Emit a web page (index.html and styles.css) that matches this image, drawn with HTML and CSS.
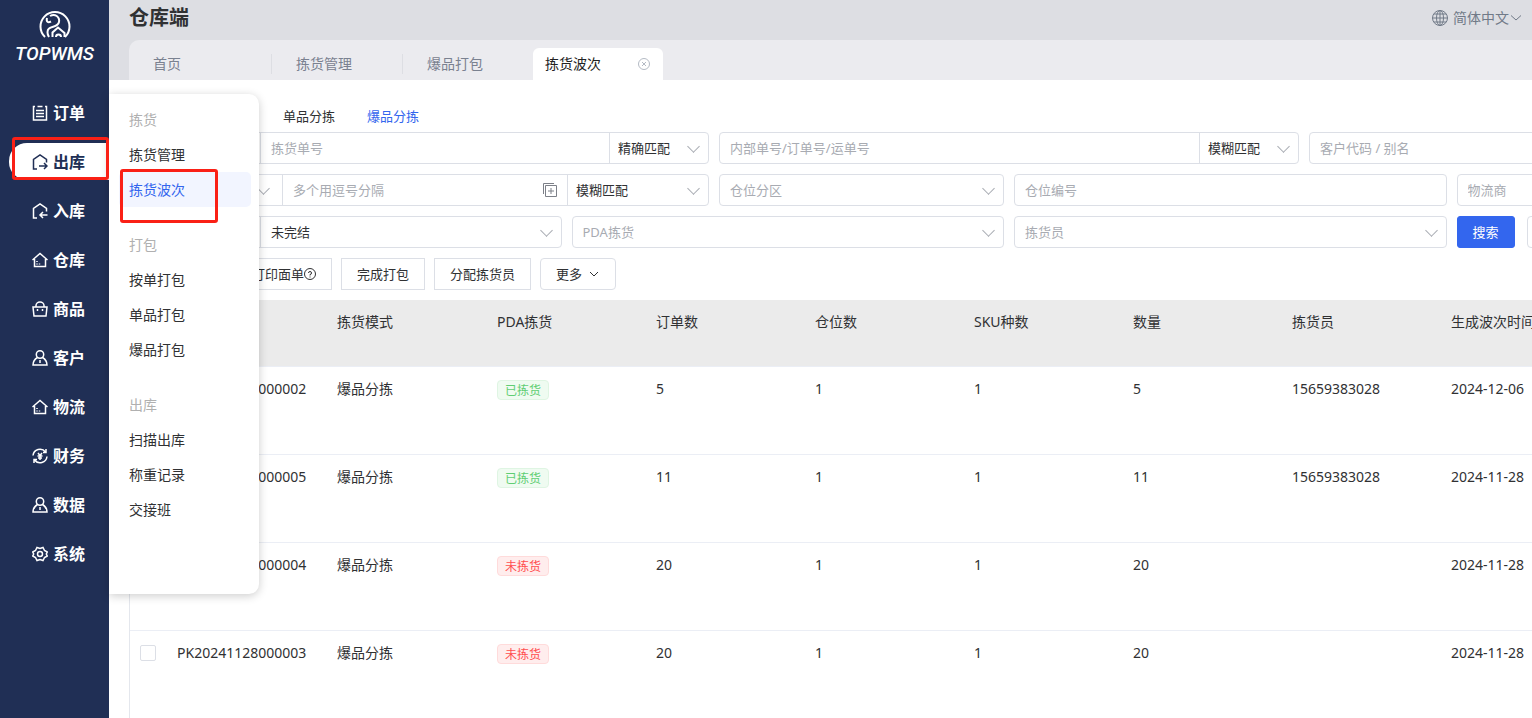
FILE: index.html
```html
<!DOCTYPE html>
<html lang="zh-CN">
<head>
    <meta charset="UTF-8">
    <meta name="viewport" content="width=device-width, initial-scale=1.0">
    <title>仓库端 - 拣货波次</title>
    <link rel="stylesheet" href="styles.css">
</head>
<body>
    <!-- 图标 -->
    <svg class="sprite" aria-hidden="true">
        <symbol id="i-order" viewBox="0 0 16 16"><path d="M3 1.5H1.5V15H14.5V1.5H13M5.5 1.5H10.5M4 5.5H12M4 8.5H12M4 11.5H12"/></symbol>
        <symbol id="i-out" viewBox="0 0 16 16"><path d="M5 15H1.5V5.5L8 1L14.5 5.5V8.5M7 12H14.5M12 9L15 12L12 15"/></symbol>
        <symbol id="i-in" viewBox="0 0 16 16"><path d="M5 15H1.5V5.5L8 1L14.5 5.5V8.5M15.500 12H8M11 9L8 12L11 15"/></symbol>
        <symbol id="i-house" viewBox="0 0 16 16"><path d="M.5 8L8 1.500L15.500 8M2.500 7V14.500H13.500V7"/><path d="M5 9V10M5 11.500V12.500M7.500 11.500V12.500"/></symbol>
        <symbol id="i-goods" viewBox="0 0 16 16"><path d="M1 6H15L14 15H2ZM4 6V4.5A4 3.5 0 0 1 12 4.5V6"/><path d="M5.5 8V10M10.5 8V10"/></symbol>
        <symbol id="i-user" viewBox="0 0 16 16"><circle cx="8" cy="4.5" r="3.700"/><path d="M5.5 7.500C3 9 1 11 1 15H15C15 11 13 9 10.5 7.500M8 10V13"/></symbol>
        <symbol id="i-money" viewBox="0 0 16 16"><path d="M1 7.500A7 7 0 0 1 13.5 4M15 8.500A7 7 0 0 1 2.500 12M14 1V4.500H11M2 15V11.500H5"/><path d="M6 5L8 7.500L10 5M5.500 8H10.500M6 10H10M8 7.500V12"/></symbol>
        <symbol id="i-gear" viewBox="0 0 16 16"><path d="M5 1.500L8 2.500L11 1.500L12.500 4.500L15.300 6L14.300 8L15.300 10L12.500 11.500L11 14.500L8 13.500L5 14.500L3.500 11.500L.7 10L1.700 8L.7 6L3.500 4.500Z"/><circle cx="8" cy="8" r="2.500"/></symbol>
    </svg>

    <aside class="sidebar">
        <div class="logo">
            <svg width="34" height="30" viewBox="0 0 34 30" fill="none" stroke="#fff" stroke-width="2">
                <path d="M7 27A14.500 14.500 0 1 1 27 27"/>
                <path d="M9 8C8 12 10 13 13 11.500M12 6C17 3 22 7 21 12C20 17 14 16 11 18.500C9 20 9 24 11 27"/>
                <path d="M14.500 27V22.500L20 17.500L26.500 23V27M18 27A2.500 2.500 0 0 1 23 27"/>
            </svg>
            <span class="logo-text">TOPWMS</span>
        </div>
        <nav class="nav">
            <a href="#"><svg><use href="#i-order"/></svg>订单</a>
            <a href="#" class="active"><svg><use href="#i-out"/></svg>出库</a>
            <a href="#"><svg><use href="#i-in"/></svg>入库</a>
            <a href="#"><svg><use href="#i-house"/></svg>仓库</a>
            <a href="#"><svg><use href="#i-goods"/></svg>商品</a>
            <a href="#"><svg><use href="#i-user"/></svg>客户</a>
            <a href="#"><svg><use href="#i-house"/></svg>物流</a>
            <a href="#"><svg><use href="#i-money"/></svg>财务</a>
            <a href="#"><svg><use href="#i-user"/></svg>数据</a>
            <a href="#"><svg><use href="#i-gear"/></svg>系统</a>
        </nav>
    </aside>

    <!-- 出库子菜单 -->
    <nav class="submenu">
        <div class="submenu-group">
            <h3>拣货</h3>
            <a href="#">拣货管理</a>
            <a href="#" class="active">拣货波次</a>
        </div>
        <div class="submenu-group">
            <h3>打包</h3>
            <a href="#">按单打包</a>
            <a href="#">单品打包</a>
            <a href="#">爆品打包</a>
        </div>
        <div class="submenu-group">
            <h3>出库</h3>
            <a href="#">扫描出库</a>
            <a href="#">称重记录</a>
            <a href="#">交接班</a>
        </div>
    </nav>

    <div class="page">
        <header class="header">
            <h1>仓库端</h1>
            <button class="lang">
                <svg width="16" height="16" viewBox="0 0 16 16"><circle cx="8" cy="8" r="7.5"/><ellipse cx="8" cy="8" rx="3.5" ry="7.5"/><path d="M8 .5V15.5M.5 8H15.5M2 4H14M2 12H14"/></svg>
                <span>简体中文</span>
                <svg width="12" height="8" viewBox="0 0 12 8"><path d="M1 1.5L6 6L11 1.5"/></svg>
            </button>
        </header>

        <div class="tabs">
            <a href="#">首页</a>
            <a href="#">拣货管理</a>
            <a href="#">爆品打包</a>
            <a href="#" class="active">拣货波次
                <svg width="12" height="12" viewBox="0 0 12 12"><circle cx="6" cy="6" r="5.5"/><path d="M4 4L8 8M8 4L4 8"/></svg>
            </a>
        </div>

        <main class="content">
            <div class="modes">
                <a href="#">单品分拣</a>
                <a href="#" class="active">爆品分拣</a>
            </div>

            <form class="filters">
                <div class="group span4">
                    <span class="select addon"><select aria-label="单号类型"><option></option></select></span>
                    <input type="text" placeholder="拣货单号" aria-label="拣货单号">
                    <span class="select match"><select aria-label="匹配方式"><option>精确匹配</option></select></span>
                </div>
                <div class="group span4">
                    <input type="text" placeholder="内部单号/订单号/运单号" aria-label="内部单号/订单号/运单号">
                    <span class="select match"><select aria-label="匹配方式"><option>模糊匹配</option></select></span>
                </div>
                <div class="group span4">
                    <input type="text" placeholder="客户代码 / 别名" aria-label="客户代码 / 别名">
                </div>

                <div class="group span4">
                    <span class="select type"><select aria-label="商品类型"><option></option></select></span>
                    <input type="text" placeholder="多个用逗号分隔" aria-label="多个用逗号分隔">
                    <svg class="batch" width="14" height="14" viewBox="0 0 14 14"><path d="M11 .5H.5V11M2.5 2.5H13.5V13.5H2.5ZM8 5V11M5 8H11"/></svg>
                    <span class="select match-wide"><select aria-label="匹配方式"><option>模糊匹配</option></select></span>
                </div>
                <div class="group span2">
                    <span class="select"><select class="empty" aria-label="仓位分区"><option>仓位分区</option></select></span>
                </div>
                <div class="group span3">
                    <input type="text" placeholder="仓位编号" aria-label="仓位编号">
                </div>
                <div class="group span3">
                    <span class="select"><select class="empty" aria-label="物流商"><option>物流商</option></select></span>
                </div>

                <div class="group span3">
                    <span class="select addon"><select aria-label="状态类型"><option></option></select></span>
                    <span class="select"><select aria-label="状态"><option>未完结</option></select></span>
                </div>
                <div class="group span3">
                    <span class="select"><select class="empty" aria-label="PDA拣货"><option>PDA拣货</option></select></span>
                </div>
                <div class="group span3">
                    <span class="select"><select class="empty" aria-label="拣货员"><option>拣货员</option></select></span>
                </div>
                <div class="search span3">
                    <button type="button" class="btn primary">搜索</button>
                    <button type="reset" class="btn round">重置</button>
                </div>
            </form>

            <div class="actions">
                <button class="btn">打印面单<svg width="12" height="12" viewBox="0 0 12 12"><circle cx="6" cy="6" r="5.5"/><path d="M4.5 5A1.5 1.5 0 1 1 6 6.5V7.5M6 8.5V9.5"/></svg></button>
                <button class="btn">完成打包</button>
                <button class="btn">分配拣货员</button>
                <button class="btn round">更多<svg class="more" width="10" height="6" viewBox="0 0 10 6"><path d="M1 1L5 5L9 1"/></svg></button>
            </div>

            <table class="table">
                <colgroup>
                    <col class="col-check"><col class="col-no"><col class="col-mode"><col><col><col><col><col><col><col class="col-time">
                </colgroup>
                <thead>
                    <tr>
                        <th></th><th></th><th>拣货模式</th><th>PDA拣货</th><th>订单数</th><th>仓位数</th><th>SKU种数</th><th>数量</th><th>拣货员</th><th>生成波次时间</th>
                    </tr>
                </thead>
                <tbody>
                    <tr>
                        <td><input type="checkbox" aria-label="选择"></td><td>PK20241206000002</td><td>爆品分拣</td><td><span class="tag done">已拣货</span></td><td>5</td><td>1</td><td>1</td><td>5</td><td>15659383028</td><td>2024-12-06</td>
                    </tr>
                    <tr>
                        <td><input type="checkbox" aria-label="选择"></td><td>PK20241128000005</td><td>爆品分拣</td><td><span class="tag done">已拣货</span></td><td>11</td><td>1</td><td>1</td><td>11</td><td>15659383028</td><td>2024-11-28</td>
                    </tr>
                    <tr>
                        <td><input type="checkbox" aria-label="选择"></td><td>PK20241128000004</td><td>爆品分拣</td><td><span class="tag todo">未拣货</span></td><td>20</td><td>1</td><td>1</td><td>20</td><td></td><td>2024-11-28</td>
                    </tr>
                    <tr>
                        <td><input type="checkbox" aria-label="选择"></td><td>PK20241128000003</td><td>爆品分拣</td><td><span class="tag todo">未拣货</span></td><td>20</td><td>1</td><td>1</td><td>20</td><td></td><td>2024-11-28</td>
                    </tr>
                </tbody>
            </table>
        </main>
    </div>

    <!-- 操作提示框 -->
    <div class="mark mark-nav"></div>
    <div class="mark mark-sub"></div>
</body>
</html>
```
FILE: styles.css
```css
* {
    box-sizing: border-box;
}

body {
    margin: 0;
    display: flex;
    height: 100vh;
    overflow: hidden;
    position: relative;
    font-family: "Noto Sans", "Noto Sans CJK SC", sans-serif;
    font-size: 14px;
    line-height: 20px;
    color: #303133;
    background: #fff;
}

a {
    color: inherit;
    text-decoration: none;
}

button, input, select {
    font: inherit;
    color: inherit;
}

svg {
    fill: none;
    stroke: currentColor;
    flex: none;
}

.sprite {
    position: absolute;
    width: 0;
    height: 0;
}

/* 左侧导航 */
.sidebar {
    flex: 0 0 109px;
    background: #202f55;
    color: #fff;
}

.logo {
    height: 94px;
    padding-top: 10px;
    display: flex;
    flex-direction: column;
    align-items: center;
}

.logo-text {
    font-family: Roboto, sans-serif;
    font-size: 19px;
    font-style: italic;
    font-weight: 500;
    line-height: 28px;
}

.nav {
    display: flex;
    flex-direction: column;
    gap: 12px;
    padding-left: 9px;
}

.nav a {
    display: flex;
    align-items: center;
    gap: 5px;
    height: 37px;
    padding-left: 23px;
    font-size: 16px;
    font-weight: bold;
}

.nav a.active {
    background: #fff;
    color: #202f55;
    border-radius: 18px 0 0 18px;
}

.nav svg {
    width: 16px;
    height: 16px;
    stroke-width: 1.5;
}

/* 弹出子菜单 */
.submenu {
    position: absolute;
    left: 109px;
    top: 94px;
    z-index: 2;
    width: 150px;
    height: 500px;
    padding: 8px 8px 0 10px;
    background: #fff;
    border-radius: 0 10px 10px 0;
    box-shadow: 0 2px 10px rgba(0, 0, 0, 0.2);
}

.submenu-group {
    margin-bottom: 20px;
}

.submenu h3,
.submenu a {
    display: block;
    margin: 0;
    padding-left: 10px;
    font-size: 14px;
    font-weight: normal;
    line-height: 35px;
}

.submenu h3 {
    color: #b0b0b0;
}

.submenu a.active {
    color: #3366ee;
    background: #f2f5ff;
    border-radius: 5px;
}

/* 顶部 */
.page {
    flex: 1;
    min-width: 0;
    background: #dddee3;
}

.header {
    display: flex;
    justify-content: space-between;
    align-items: center;
    height: 40px;
    padding: 0 10px 4px 20px;
}

.header h1 {
    margin: 0;
    font-size: 20px;
    line-height: 28px;
}

.lang {
    display: flex;
    align-items: center;
    padding: 0;
    border: 0;
    background: none;
    color: #717a88;
}

.lang span {
    margin: 0 1px 0 5px;
}

.tabs {
    display: flex;
    align-items: flex-end;
    height: 40px;
    margin-left: 20px;
    background: #ebebef;
    border-radius: 10px 0 0 0;
    color: #7a8190;
}

.tabs a {
    position: relative;
    width: 131px;
    padding-left: 24px;
    line-height: 32px;
}

.tabs a:first-child {
    width: 143px;
}

.tabs a + a:not(.active)::before {
    content: '';
    position: absolute;
    left: -1px;
    top: 6px;
    height: 20px;
    border-left: 1px solid #dddee3;
}

.tabs a.active {
    display: flex;
    align-items: center;
    justify-content: space-between;
    width: 130px;
    margin-left: -1px;
    padding: 0 13px 0 12px;
    background: #fff;
    color: #222;
    border-radius: 6px 6px 0 0;
}

.tabs svg {
    color: #b4bac4;
}

/* 内容区 */
.content {
    height: 100%;
    padding: 26px 20px 0;
    min-width: 1800px;
    background: #fff;
    font-size: 13px;
}

.modes {
    display: flex;
    gap: 32px;
    height: 26px;
    padding-left: 154px;
}

.modes .active {
    color: #3366ee;
}

.filters {
    display: grid;
    grid-template-columns: repeat(12, 1fr);
    gap: 10px;
}

.span2 { grid-column: span 2; }
.span3 { grid-column: span 3; }
.span4 { grid-column: span 4; }

.group {
    display: flex;
    align-items: center;
    height: 32px;
    border: 1px solid #dcdfe6;
    border-radius: 4px;
}

.group input {
    flex: 1;
    min-width: 0;
    height: 30px;
    padding: 0 10px;
    border: 0;
    background: none;
    outline: none;
}

.group input::placeholder,
.group .empty {
    color: #a8abb2;
    opacity: 1;
}

.select {
    flex: 1;
    position: relative;
    height: 30px;
}

.select select {
    appearance: none;
    width: 100%;
    height: 30px;
    padding: 0 10px;
    border: 0;
    background: none;
    outline: none;
}

.select::after {
    content: '';
    position: absolute;
    right: 10px;
    top: 9px;
    width: 8px;
    height: 8px;
    border: solid #a8abb2;
    border-width: 0 1px 1px 0;
    transform: rotate(45deg);
}

.addon,
.type,
.match,
.match-wide {
    flex: none;
    border: 0 solid #dcdfe6;
}

.addon {
    width: 131px;
    border-right-width: 1px;
}

.type {
    width: 153px;
    border-right-width: 1px;
}

.type::after {
    right: 14px;
}

.match {
    width: 99px;
    border-left-width: 1px;
}

.match-wide {
    width: 141px;
    border-left-width: 1px;
}

.match select,
.match-wide select {
    padding-left: 8px;
}

.batch {
    margin-right: 10px;
    color: #7d8088;
}

.search {
    display: flex;
    gap: 12px;
}

.btn {
    display: flex;
    align-items: center;
    height: 32px;
    padding: 0 15px;
    border: 1px solid #dcdfe6;
    background: #fff;
    white-space: nowrap;
}

.btn.round {
    border-radius: 4px;
}

.btn.primary {
    border-color: #3366ee;
    border-radius: 3px;
    background: #3366ee;
    color: #fff;
}

.actions {
    display: flex;
    gap: 9px;
    margin: 10px 0;
    padding-left: 107px;
}

.more {
    margin: 0 1px 0 7px;
}

/* 表格 */
.table {
    width: 100%;
    table-layout: fixed;
    border-collapse: separate;
    border-spacing: 0;
    border-left: 1px solid #e4e7ed;
    font-size: 14px;
}

.table col {
    width: 159px;
}

.table .col-check {
    width: 37px;
}

.table .col-no,
.table .col-mode {
    width: 160px;
}

.table .col-time {
    width: auto;
}

.table th,
.table td {
    padding: 12px 10px 0;
    text-align: left;
    vertical-align: top;
    font-weight: normal;
    border-bottom: 1px solid #ebeef5;
}

.table th {
    height: 67px;
    background: #ebebeb;
}

.table td {
    height: 88px;
}

.table input {
    appearance: none;
    display: block;
    width: 16px;
    height: 16px;
    margin: 2px 0 0;
    border: 1px solid #dcdfe6;
    border-radius: 2px;
    background: #fff;
}

.tag {
    display: inline-block;
    height: 20px;
    margin-top: 1px;
    padding: 0 7px;
    border: 1px solid;
    border-radius: 4px;
    font-size: 12px;
    line-height: 19px;
}

.tag.done {
    color: #5fce73;
    background: #effbf1;
    border-color: #dff5e3;
}

.tag.todo {
    color: #ff4d4f;
    background: #ffeded;
    border-color: #ffdbdb;
}

/* 红色标记框 */
.mark {
    position: absolute;
    z-index: 3;
    border: 3px solid #fa2016;
    border-radius: 3px;
    pointer-events: none;
}

.mark-nav {
    left: 12px;
    top: 137px;
    width: 97px;
    height: 43px;
}

.mark-sub {
    left: 120px;
    top: 169px;
    width: 98px;
    height: 54px;
}
```
